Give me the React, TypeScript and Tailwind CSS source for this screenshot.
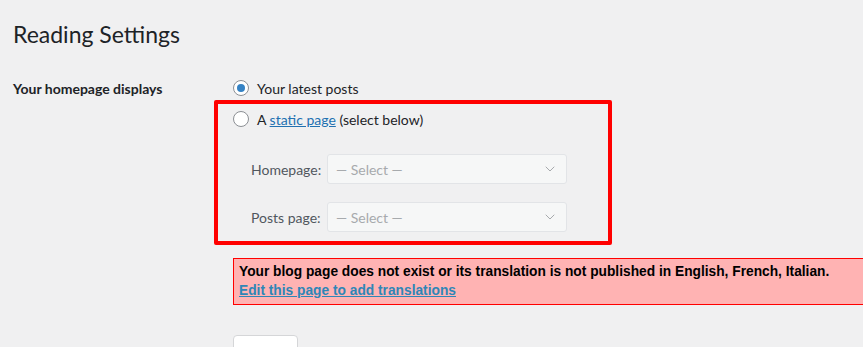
import { ChevronDown } from "lucide-react";

const font = { fontFamily: 'Lato, "Noto Sans", "Liberation Sans", sans-serif' };

function Radio({ checked }: { checked?: boolean }) {
	return (
		<span className="flex h-4 w-4 shrink-0 items-center justify-center rounded-full border border-[#8c8f94] bg-white">
			{checked && <span className="h-2 w-2 rounded-full bg-[#3582c4]" />}
		</span>
	);
}

function DisabledSelect({ label }: { label: string }) {
	return (
		<div className="flex items-center">
			<span className="w-[76px] text-[#50575e]">{label}</span>
			<div className="flex h-[30px] w-[240px] items-center justify-between rounded-[3px] border border-[#e2e4e7] bg-[#f6f7f7] pl-2 pr-2 text-[#a7aaad]">
				<span>— Select —</span>
				<ChevronDown className="h-4 w-4 text-[#a7aaad]" strokeWidth={1.5} />
			</div>
		</div>
	);
}

export default function App() {
	return (
		<div
			className="h-[347px] w-[863px] overflow-hidden bg-[#f0f0f1] pl-[13px] text-[14px] text-[#1d2327]"
			style={font}
		>
			<h1 className="pt-[19px] text-[23px] leading-[30px] font-normal">
				Reading Settings
			</h1>

			<div className="mt-[29px] flex">
				<div className="w-[220px] shrink-0 pt-[1px] font-bold leading-[20px]">
					Your homepage displays
				</div>
				<div className="relative flex flex-col">
					<label className="flex h-[20px] items-center gap-2">
						<Radio checked />
						<span>Your latest posts</span>
					</label>
					<label className="mt-[11px] flex h-[20px] items-center gap-2">
						<Radio />
						<span>
							A{" "}
							<span className="text-[#2271b1] underline">static page</span>{" "}
							(select below)
						</span>
					</label>
					<div className="mt-[25px] ml-[18px] flex flex-col gap-[18px]">
						<DisabledSelect label="Homepage:" />
						<DisabledSelect label="Posts page:" />
					</div>

					{/* annotation box drawn over the static page options */}
					<div className="pointer-events-none absolute top-[22px] left-[-19px] h-[145px] w-[398px] rounded-[2px] border-4 border-[#ff0000]" />

					<div className="mt-[26px] w-[700px] border border-[#ff0000] bg-[#ffb3b3] px-[5px] pt-[3px] pb-[4px] font-['Liberation_Sans',sans-serif] text-[13.75px] font-bold leading-[19px] text-black">
						<div className="whitespace-nowrap">
							Your blog page does not exist or its translation is not
							published in English, French, Italian.
						</div>
						<a className="text-[#2e86b7] underline">
							Edit this page to add translations
						</a>
					</div>
				</div>
			</div>

			<div className="mt-[30px] flex">
				<div className="w-[220px] shrink-0 pt-[8px] font-bold leading-[20px]">
					Blog pages show at most
				</div>
				<div className="h-[30px] w-[65px] rounded-[4px] border border-[#d5d6d8] bg-white" />
			</div>
		</div>
	);
}
